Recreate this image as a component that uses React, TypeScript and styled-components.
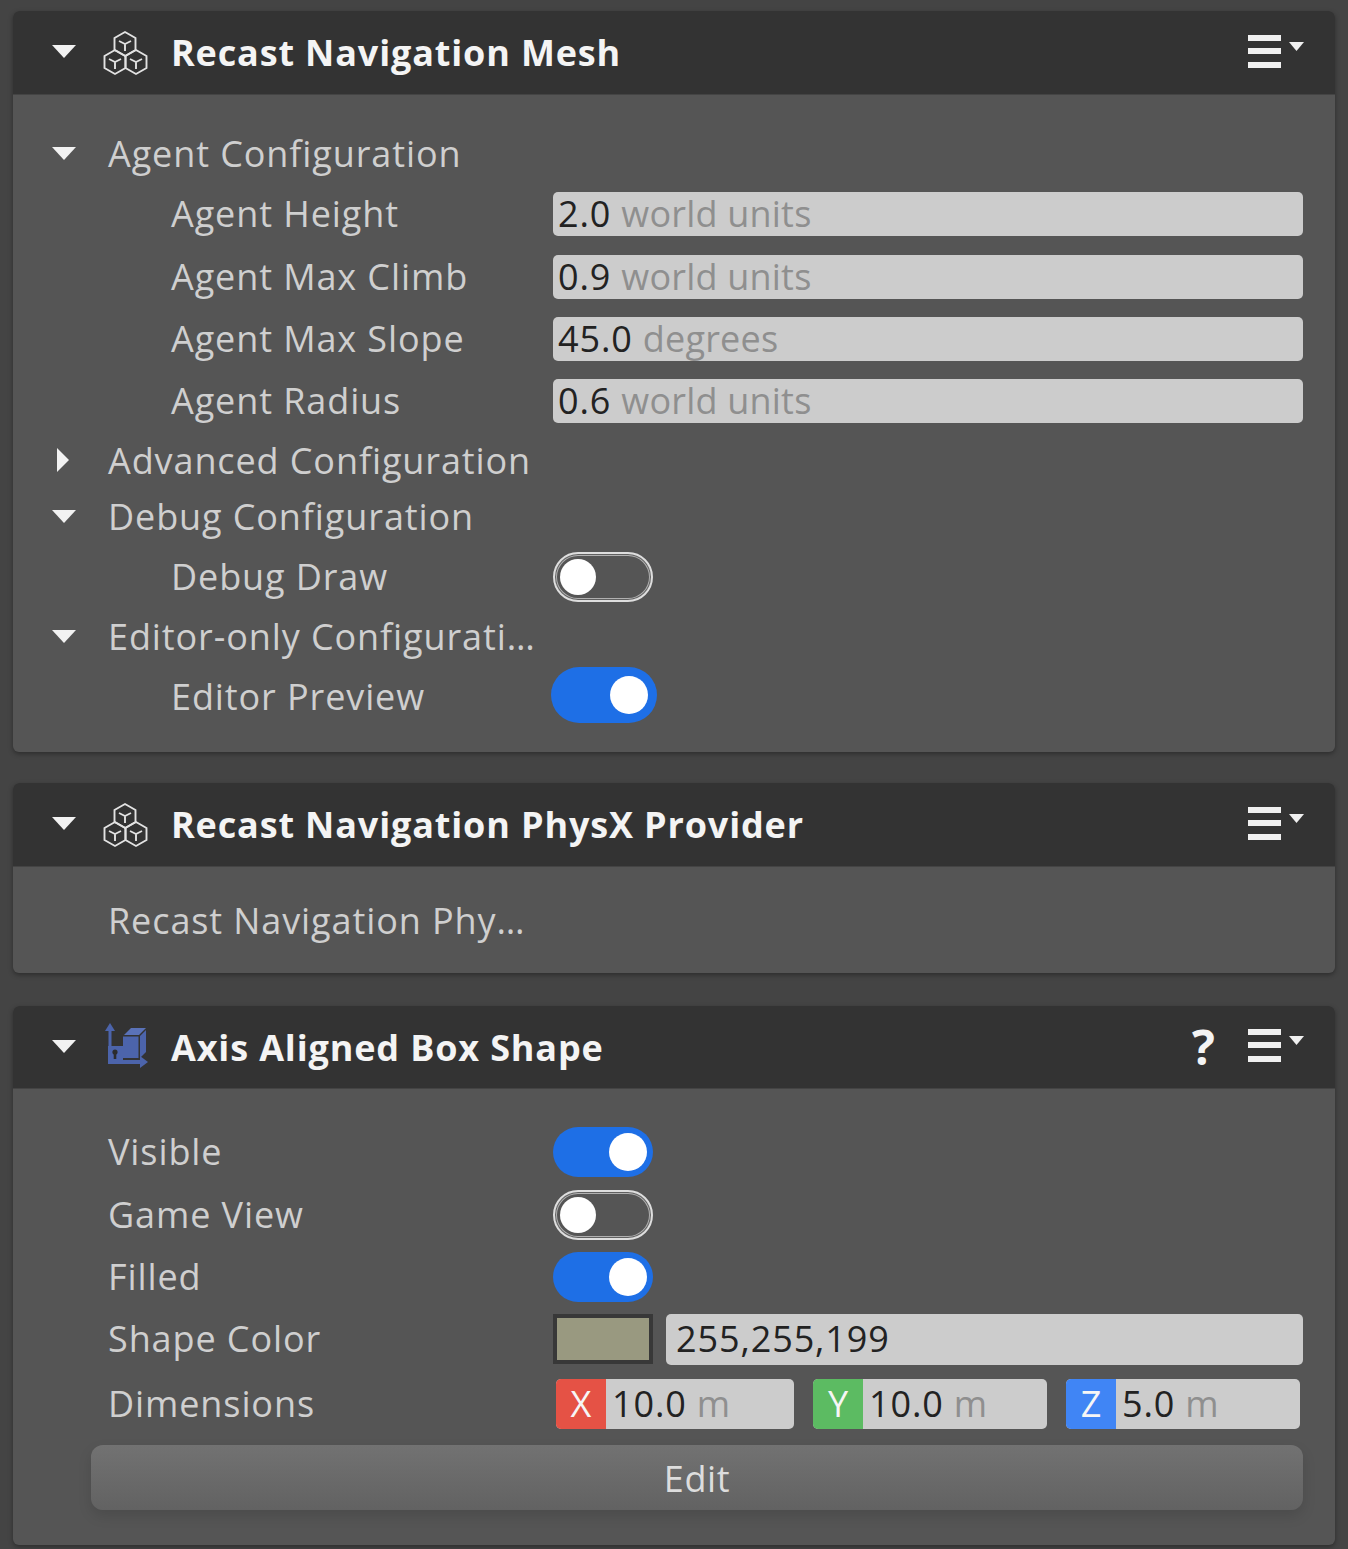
import React from 'react';
import styled, { createGlobalStyle } from 'styled-components';

const GlobalStyle = createGlobalStyle`
  html, body {
    margin: 0;
    padding: 0;
    background: #444444;
    font-family: "Open Sans", "Liberation Sans", sans-serif;
  }
`;

const Page = styled.div`
  width: 1348px;
  height: 1549px;
  overflow: hidden;
  box-sizing: border-box;
  padding: 11px 13px 0;
  background: #444444;
`;

const Panel = styled.section<{ $gap: number }>`
  margin-bottom: ${p => p.$gap}px;
  border-radius: 6px;
  background: #555555;
  overflow: hidden;
  box-shadow: 0 2px 5px rgba(0, 0, 0, 0.35);
`;

const Header = styled.header<{ $h?: number }>`
  height: ${p => p.$h ?? 84}px;
  box-sizing: border-box;
  display: flex;
  align-items: center;
  padding: 0 31px 0 39px;
  background: #333333;
  border-bottom: 1px solid #444444;
`;

const Arrow = styled.span<{ $open: boolean }>`
  flex: none;
  display: block;
  width: 0;
  height: 0;
  border-style: solid;
  border-color: transparent;
  ${p =>
    p.$open
      ? `
    border-width: 13px 12px 0;
    border-top-color: #f2f2f2;
    margin: -2px 0 0;
  `
      : `
    border-width: 12px 0 12px 12px;
    border-left-color: #f2f2f2;
    margin: -2px 7px 0 5px;
  `}
`;

const HeaderIcon = styled.svg`
  flex: none;
  width: 45px;
  height: 46px;
  margin: 0 24px 0 27px;
  overflow: visible;
`;

const Title = styled.h2`
  flex: 1;
  margin: 1px 0 0 -1px;
  font-size: 36px;
  font-weight: 700;
  line-height: 46px;
  letter-spacing: 0.85px;
  color: #f4f4f4;
`;

const HelpMark = styled.span`
  width: 22px;
  margin-right: 34px;
  font-size: 48px;
  font-weight: 700;
  line-height: 46px;
  text-align: center;
  color: #f4f4f4;
`;

const MenuIcon = styled.svg`
  flex: none;
  width: 56px;
  height: 34px;
  margin-top: -2px;
`;

const Body = styled.div<{ $top: number; $bottom: number }>`
  padding: ${p => p.$top}px 32px ${p => p.$bottom}px 0;
`;

const Row = styled.div<{ $h: number; $indent: number }>`
  height: ${p => p.$h}px;
  display: grid;
  grid-template-columns: 540px 1fr;
  align-items: center;

  & > :first-child {
    padding-left: ${p => p.$indent}px;
  }
`;

const Label = styled.span`
  font-size: 36px;
  line-height: 46px;
  letter-spacing: 0.9px;
  color: #cfcfcf;
  white-space: nowrap;
`;

const SectionLabel = styled(Label)`
  display: flex;
  align-items: center;
  gap: 32px;
`;

const ValueBox = styled.div`
  height: 44px;
  box-sizing: border-box;
  display: flex;
  align-items: center;
  gap: 10px;
  padding: 0 0 0 5px;
  border-radius: 5px;
  background: #cccccc;
  font-size: 36px;
  line-height: 44px;
  letter-spacing: 0.9px;
  color: #222222;
`;

const Unit = styled.span`
  letter-spacing: 0.2px;
  color: #8f8f8f;
`;

const Toggle = styled.span<{ $on: boolean; $big?: boolean }>`
  display: flex;
  align-items: center;
  box-sizing: border-box;
  width: ${p => (p.$big ? 106 : 100)}px;
  height: ${p => (p.$big ? 56 : 50)}px;
  margin: ${p => (p.$big ? '-4px 0 0 -2px' : '0')};
  padding: 0 ${p => (p.$on ? (p.$big ? 9 : 6) : 5)}px;
  justify-content: ${p => (p.$on ? 'flex-end' : 'flex-start')};
  border-radius: 28px;
  background: ${p => (p.$on ? '#1e6fe6' : 'transparent')};
  border: ${p => (p.$on ? '0' : '2px solid #dedede')};
  box-shadow: ${p => (p.$on ? 'none' : 'inset 0 0 0 1px #606060, inset 0 0 0 2px #b0b0b0')};

  &::after {
    content: '';
    display: block;
    width: ${p => (p.$on ? 38 : 36)}px;
    height: ${p => (p.$on ? 38 : 36)}px;
    border-radius: 50%;
    background: #ffffff;
  }
`;

const ColorCell = styled.div`
  display: flex;
  align-items: center;
  gap: 13px;
`;

const Swatch = styled.span<{ $color: string }>`
  flex: none;
  width: 100px;
  height: 50px;
  box-sizing: border-box;
  border: 4px solid #383838;
  background: ${p => p.$color};
`;

const ColorValue = styled(ValueBox)`
  flex: 1;
  height: 51px;
  padding-left: 10px;
`;

const Vector = styled.div`
  display: grid;
  grid-template-columns: 238px 234px 234px;
  gap: 19px;
  padding-left: 3px;
`;

const AxisField = styled(ValueBox)`
  height: 50px;
  padding: 0;
  gap: 0;
  align-items: flex-start;
  line-height: 50px;
  overflow: hidden;
`;

const AxisBadge = styled.span<{ $color: string }>`
  flex: none;
  width: 50px;
  height: 50px;
  margin-right: 6px;
  display: flex;
  align-items: center;
  justify-content: center;
  background: ${p => p.$color};
  letter-spacing: 0;
  color: #f6f6f6;
`;

const AxisUnit = styled(Unit)`
  margin-left: 10px;
`;

const EditButton = styled.button`
  display: block;
  box-sizing: border-box;
  width: 1212px;
  height: 65px;
  margin: 7px 0 0 78px;
  padding: 2px 0 0;
  border: 0;
  border-radius: 12px;
  background: linear-gradient(#727272, #626262);
  box-shadow: 0 6px 14px rgba(0, 0, 0, 0.12);
  font-family: inherit;
  font-size: 36px;
  letter-spacing: 0.6px;
  color: #dddddd;
`;

const CubeCluster = () => {
  const cube = (x: number, y: number) => (
    <g key={`${x}-${y}`}>
      <polygon points={`${x},${y - 12} ${x + 10.5},${y - 6} ${x + 10.5},${y + 6} ${x},${y + 12} ${x - 10.5},${y + 6} ${x - 10.5},${y - 6}`} />
      <path d={`M${x - 6} ${y - 3}L${x} ${y}L${x + 6} ${y - 3}M${x} ${y}V${y + 7}`} />
    </g>
  );
  return (
    <HeaderIcon viewBox="0 0 45 46" fill="none" stroke="#e2e2e2" strokeWidth="1.9">
      {cube(22, 14)}
      {cube(12, 32)}
      {cube(33, 32)}
    </HeaderIcon>
  );
};

const AxisBoxIcon = () => (
  <HeaderIcon viewBox="0 0 45 46">
    <g transform="translate(2,-1)">
      <g fill="#4c64ab">
        <polygon points="5,0 0,8 3.5,8 3.5,24 6.5,24 6.5,8 10,8" />
        <rect x="3" y="23" width="15" height="18" />
        <polygon points="19,12 26,5 41,5 34,12" fill="#5a72b8" />
        <polygon points="18,13.5 33.5,13.5 33.5,35 18,35" />
        <polygon points="35,13 41,7 41,29 35,35" />
        <polygon points="18,37 35,37 35,33 43,39 35,45 35,41 18,41" />
      </g>
      <circle cx="10" cy="29" r="2.6" fill="#2c2c2c" />
      <rect x="8.7" y="29" width="2.6" height="7" fill="#2c2c2c" />
    </g>
  </HeaderIcon>
);

const MenuGlyph = () => (
  <MenuIcon viewBox="0 0 56 34">
    <g fill="#f0f0f0">
      <rect x="0" y="0" width="33" height="6" />
      <rect x="0" y="13" width="33" height="6" />
      <rect x="0" y="27" width="33" height="6" />
      <polygon points="41,7 56,7 48.5,16" />
    </g>
  </MenuIcon>
);

const Section = ({ open = true, children }: { open?: boolean; children: React.ReactNode }) => (
  <SectionLabel>
    <Arrow $open={open} />
    {children}
  </SectionLabel>
);

const Measure = ({ value, unit }: { value: string; unit: string }) => (
  <ValueBox>
    {value}
    <Unit>{unit}</Unit>
  </ValueBox>
);

const Axis = ({ name, color, value }: { name: string; color: string; value: string }) => (
  <AxisField>
    <AxisBadge $color={color}>{name}</AxisBadge>
    {value}
    <AxisUnit>m</AxisUnit>
  </AxisField>
);

export default function App() {
  return (
    <>
      <GlobalStyle />
      <Page>
        <Panel $gap={31}>
          <Header>
            <Arrow $open />
            <CubeCluster />
            <Title>Recast Navigation Mesh</Title>
            <MenuGlyph />
          </Header>
          <Body $top={30} $bottom={22}>
            <Row $h={58} $indent={39}>
              <Section>Agent Configuration</Section>
            </Row>
            <Row $h={62} $indent={158}>
              <Label>Agent Height</Label>
              <Measure value="2.0" unit="world units" />
            </Row>
            <Row $h={63} $indent={158}>
              <Label>Agent Max Climb</Label>
              <Measure value="0.9" unit="world units" />
            </Row>
            <Row $h={62} $indent={158}>
              <Label>Agent Max Slope</Label>
              <Measure value="45.0" unit="degrees" />
            </Row>
            <Row $h={62} $indent={158}>
              <Label>Agent Radius</Label>
              <Measure value="0.6" unit="world units" />
            </Row>
            <Row $h={58} $indent={39}>
              <Section open={false}>Advanced Configuration</Section>
            </Row>
            <Row $h={54} $indent={39}>
              <Section>Debug Configuration</Section>
            </Row>
            <Row $h={66} $indent={158}>
              <Label>Debug Draw</Label>
              <Toggle $on={false} />
            </Row>
            <Row $h={54} $indent={39}>
              <Section>Editor-only Configurati…</Section>
            </Row>
            <Row $h={66} $indent={158}>
              <Label>Editor Preview</Label>
              <Toggle $on $big />
            </Row>
          </Body>
        </Panel>

        <Panel $gap={33}>
          <Header>
            <Arrow $open />
            <CubeCluster />
            <Title>Recast Navigation PhysX Provider</Title>
            <MenuGlyph />
          </Header>
          <Body $top={23} $bottom={21}>
            <Row $h={62} $indent={95}>
              <Label>Recast Navigation Phy…</Label>
            </Row>
          </Body>
        </Panel>

        <Panel $gap={0}>
          <Header $h={83}>
            <Arrow $open />
            <AxisBoxIcon />
            <Title>Axis Aligned Box Shape</Title>
            <HelpMark>?</HelpMark>
            <MenuGlyph />
          </Header>
          <Body $top={32} $bottom={35}>
            <Row $h={62} $indent={95}>
              <Label>Visible</Label>
              <Toggle $on />
            </Row>
            <Row $h={63} $indent={95}>
              <Label>Game View</Label>
              <Toggle $on={false} />
            </Row>
            <Row $h={62} $indent={95}>
              <Label>Filled</Label>
              <Toggle $on />
            </Row>
            <Row $h={62} $indent={95}>
              <Label>Shape Color</Label>
              <ColorCell>
                <Swatch $color="#999980" />
                <ColorValue>255,255,199</ColorValue>
              </ColorCell>
            </Row>
            <Row $h={68} $indent={95}>
              <Label>Dimensions</Label>
              <Vector>
                <Axis name="X" color="#e55245" value="10.0" />
                <Axis name="Y" color="#5cbb62" value="10.0" />
                <Axis name="Z" color="#4085f5" value="5.0" />
              </Vector>
            </Row>
            <EditButton>Edit</EditButton>
          </Body>
        </Panel>
      </Page>
    </>
  );
}
